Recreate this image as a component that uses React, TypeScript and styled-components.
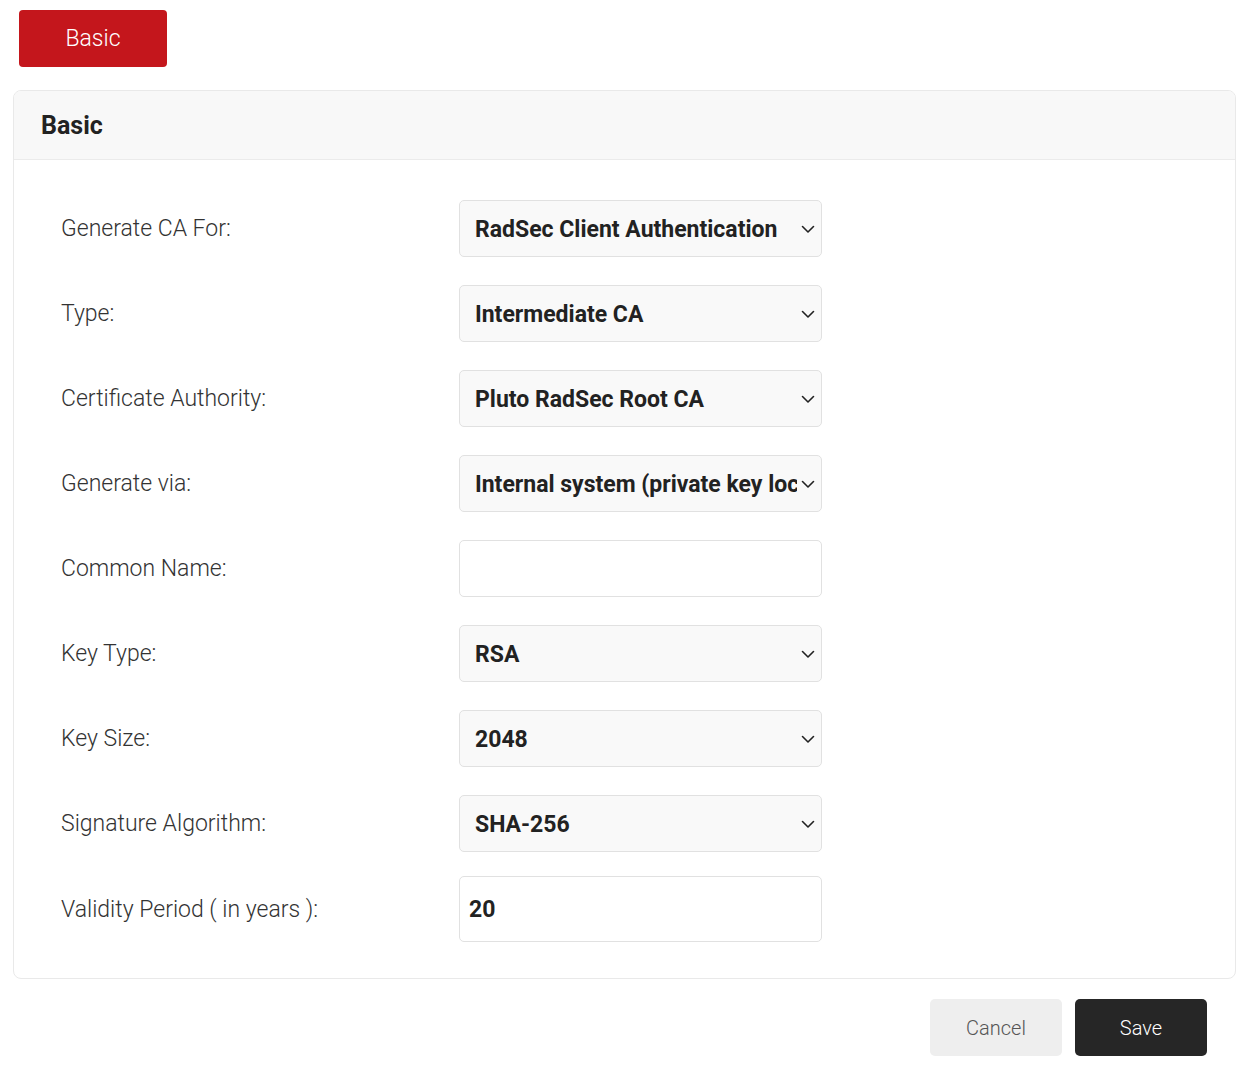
import React from 'react';
import styled, { createGlobalStyle } from 'styled-components';

const GlobalStyle = createGlobalStyle`
  body {
    margin: 0;
    background: #fff;
    font-family: Roboto, "Liberation Sans", Arial, sans-serif;
    color: #333;
  }
`;

const Page = styled.div`
  padding: 10px 8px 24px 13px;
`;

const Tabs = styled.div`
  display: flex;
  padding-left: 6px;
  margin-bottom: 23px;
`;

const TabButton = styled.button`
  width: 148px;
  height: 57px;
  border: none;
  border-radius: 4px;
  background: #c4161c;
  color: #fff;
  font-family: Roboto, sans-serif;
  font-weight: 300;
  font-size: 23px;
  cursor: pointer;
`;

const Card = styled.section`
  border: 1px solid #e9e9e9;
  border-radius: 8px;
  overflow: hidden;
`;

const CardHeader = styled.div`
  height: 68px;
  display: flex;
  align-items: center;
  padding-left: 27px;
  background: #f8f8f8;
  border-bottom: 1px solid #ebebeb;
  font-size: 25px;
  font-weight: 700;
  color: #222;
`;

const CardBody = styled.div`
  padding: 40px 47px 36px;
  display: flex;
  flex-direction: column;
  gap: 28px;
`;

const Row = styled.div<{ $tight?: boolean }>`
  display: grid;
  grid-template-columns: 398px 363px;
  align-items: center;
  margin-top: ${({ $tight }) => ($tight ? '-4px' : '0')};
`;

const Label = styled.label`
  font-size: 23px;
  font-weight: 300;
  color: #333;
`;

const SelectWrap = styled.div`
  position: relative;
  height: 57px;
`;

const Select = styled.select`
  appearance: none;
  width: 100%;
  height: 100%;
  padding: 1px 24px 0 15px;
  border: 1px solid #e1e1e1;
  border-radius: 5px;
  background: #f9f9f9;
  font-family: Roboto, sans-serif;
  font-size: 23px;
  font-weight: 700;
  color: #222;
  outline: none;
`;

const Chevron = styled.svg`
  position: absolute;
  right: 6px;
  top: 50%;
  transform: translateY(-50%);
  pointer-events: none;
`;

const TextInput = styled.input<{ $tall?: boolean }>`
  box-sizing: border-box;
  width: 100%;
  height: ${({ $tall }) => ($tall ? '66px' : '57px')};
  padding: 0 9px;
  border: 1px solid #e1e1e1;
  border-radius: 5px;
  background: #fff;
  font-family: Roboto, sans-serif;
  font-size: 23px;
  font-weight: 700;
  color: #222;
  outline: none;
`;

const Footer = styled.div`
  display: flex;
  justify-content: flex-end;
  gap: 13px;
  margin-top: 20px;
  padding-right: 29px;
`;

const ActionButton = styled.button<{ $primary?: boolean }>`
  width: 132px;
  height: 57px;
  border: none;
  border-radius: 5px;
  background: ${({ $primary }) => ($primary ? '#262626' : '#eeeeee')};
  color: ${({ $primary }) => ($primary ? '#fff' : '#555')};
  font-family: Roboto, sans-serif;
  font-size: 20px;
  font-weight: 300;
  cursor: pointer;
`;

interface SelectFieldProps {
  label: string;
  value: string;
}

function SelectField({ label, value }: SelectFieldProps): JSX.Element {
  return (
    <Row>
      <Label>{label}</Label>
      <SelectWrap>
        <Select defaultValue={value}>
          <option>{value}</option>
        </Select>
        <Chevron width="16" height="16" viewBox="0 0 16 16">
          <path d="M2.5 5.5 L8 11 L13.5 5.5" fill="none" stroke="#222" strokeWidth="1.6" strokeLinecap="round" strokeLinejoin="round" />
        </Chevron>
      </SelectWrap>
    </Row>
  );
}

export default function App(): JSX.Element {
  return (
    <Page>
      <GlobalStyle />
      <Tabs>
        <TabButton>Basic</TabButton>
      </Tabs>
      <Card>
        <CardHeader>Basic</CardHeader>
        <CardBody>
          <SelectField label="Generate CA For:" value="RadSec Client Authentication" />
          <SelectField label="Type:" value="Intermediate CA" />
          <SelectField label="Certificate Authority:" value="Pluto RadSec Root CA" />
          <SelectField label="Generate via:" value="Internal system (private key located on this system)" />
          <Row>
            <Label>Common Name:</Label>
            <TextInput type="text" />
          </Row>
          <SelectField label="Key Type:" value="RSA" />
          <SelectField label="Key Size:" value="2048" />
          <SelectField label="Signature Algorithm:" value="SHA-256" />
          <Row $tight>
            <Label>Validity Period ( in years ):</Label>
            <TextInput type="text" $tall defaultValue="20" />
          </Row>
        </CardBody>
      </Card>
      <Footer>
        <ActionButton>Cancel</ActionButton>
        <ActionButton $primary>Save</ActionButton>
      </Footer>
    </Page>
  );
}
